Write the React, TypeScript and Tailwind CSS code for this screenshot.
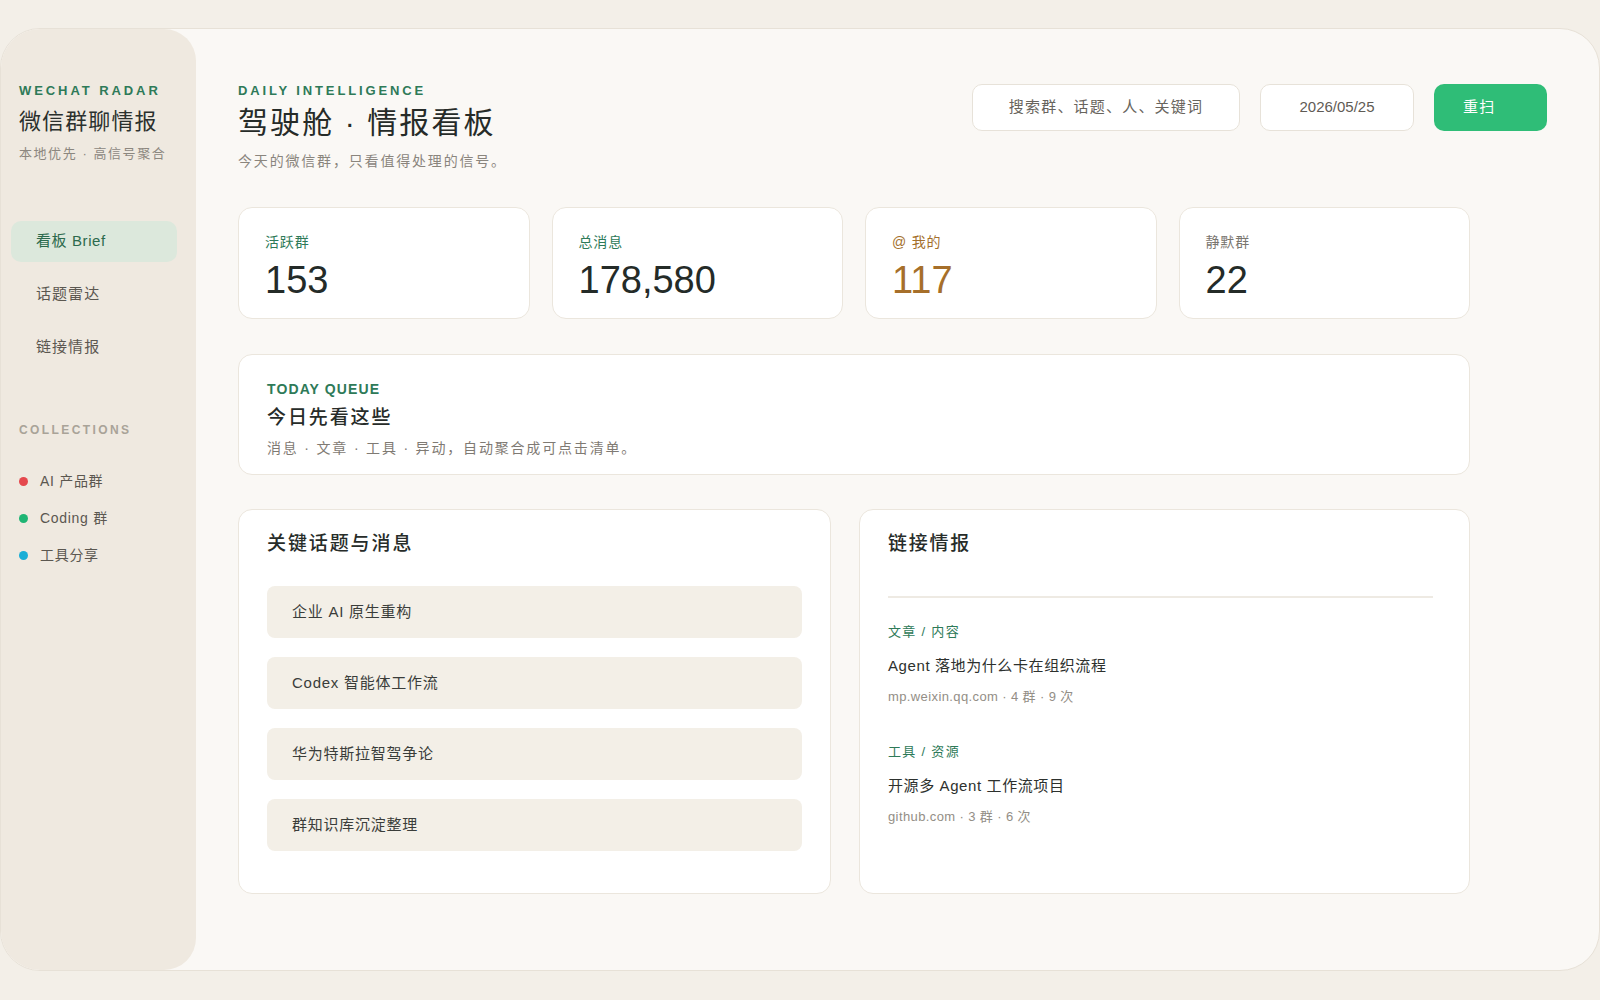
import React from "react";

const stats = [
  { label: "活跃群", value: "153", labelClass: "text-[#2e7a58]", valueClass: "text-[#242b28]" },
  { label: "总消息", value: "178,580", labelClass: "text-[#2e7a58]", valueClass: "text-[#242b28]" },
  { label: "@ 我的", value: "117", labelClass: "text-[#a4702c]", valueClass: "text-[#a66f2a]" },
  { label: "静默群", value: "22", labelClass: "text-[#7a766f]", valueClass: "text-[#242b28]" },
];

const topics = ["企业 AI 原生重构", "Codex 智能体工作流", "华为特斯拉智驾争论", "群知识库沉淀整理"];

const links = [
  { kind: "文章 / 内容", title: "Agent 落地为什么卡在组织流程", meta: "mp.weixin.qq.com · 4 群 · 9 次" },
  { kind: "工具 / 资源", title: "开源多 Agent 工作流项目", meta: "github.com · 3 群 · 6 次" },
];

const collections = [
  { name: "AI 产品群", dot: "bg-[#e5484d]" },
  { name: "Coding 群", dot: "bg-[#1fb574]" },
  { name: "工具分享", dot: "bg-[#1aaed6]" },
];

export default function App() {
  return (
    <div
      className="min-h-screen bg-[#f3efe8] pt-[28px] text-[#272d2a]"
      style={{ fontFamily: '"Liberation Sans", "Noto Sans CJK SC", sans-serif' }}
    >
      <div className="flex h-[943px] w-full overflow-hidden rounded-[40px] border border-[#e7e1d7] bg-[#faf8f5]">
        {/* sidebar */}
        <aside className="flex w-[195px] shrink-0 flex-col rounded-r-[32px] bg-[#efe9e0]">
          <div className="pl-[18px] pt-[54px]">
            <div className="text-[13px] font-bold leading-[16px] tracking-[0.225em] text-[#2e7a58]">WECHAT RADAR</div>
            <div className="mt-[8px] text-[22px] leading-[30px] tracking-[0.05em] text-[#2b302d]">微信群聊情报</div>
            <div className="mt-[8px] text-[13px] leading-[18px] tracking-[0.12em] text-[#8c877f]">本地优先 · 高信号聚合</div>
          </div>

          <nav className="ml-[10px] mr-[19px] mt-[58px] flex flex-col gap-[12px]">
            <div className="flex h-[41px] items-center rounded-[10px] bg-[#dce8dc] pl-[25px] text-[15px] tracking-[0.04em] text-[#2c6a4d]">
              看板 Brief
            </div>
            <div className="flex h-[41px] items-center pl-[25px] text-[15px] tracking-[0.07em] text-[#5b5750]">话题雷达</div>
            <div className="flex h-[41px] items-center pl-[25px] text-[15px] tracking-[0.07em] text-[#5b5750]">链接情报</div>
          </nav>

          <div className="mt-[54px] pl-[18px] text-[12px] font-bold leading-[16px] tracking-[0.2em] text-[#a9a398]">
            COLLECTIONS
          </div>
          <div className="mt-[33px] flex flex-col gap-[17px] pl-[18px]">
            {collections.map((c) => (
              <div key={c.name} className="flex h-[20px] items-center text-[14px] tracking-[0.05em] text-[#5b5750]">
                <span className={`h-[9px] w-[9px] rounded-full ${c.dot}`} />
                <span className="ml-[12px]">{c.name}</span>
              </div>
            ))}
          </div>
        </aside>

        {/* main */}
        <main className="flex-1 pl-[42px] pr-[52px] pt-[54px]">
          <header className="flex items-start justify-between">
            <div>
              <div className="text-[13px] font-bold leading-[16px] tracking-[0.22em] text-[#2e7a58]">DAILY INTELLIGENCE</div>
              <h1 className="mt-[6px] text-[30px] leading-[36px] tracking-[0.07em] text-[#262b28]">
                驾驶舱 · 情报看板
              </h1>
              <p className="mt-[10px] text-[14px] leading-[20px] tracking-[0.13em] text-[#8a857d]">今天的微信群，只看值得处理的信号。</p>
            </div>
            <div className="mt-[1px] flex items-center gap-[20px]">
              <div className="flex h-[47px] w-[268px] items-center justify-center rounded-[10px] border border-[#e7e2d9] bg-white text-[15px] tracking-[0.08em] text-[#68645d]">
                搜索群、话题、人、关键词
              </div>
              <div className="flex h-[47px] w-[154px] items-center justify-center rounded-[10px] border border-[#e7e2d9] bg-white text-[15px] text-[#5f5b55]">
                2026/05/25
              </div>
              <button className="h-[47px] w-[113px] rounded-[10px] bg-[#2fbd77] pl-[29px] text-left text-[15px] tracking-[0.08em] text-white">
                重扫
              </button>
            </div>
          </header>

          <div className="w-[1232px]">
            <section className="mt-[36px] grid grid-cols-4 gap-[22px]">
              {stats.map((s) => (
                <div key={s.label} className="h-[112px] rounded-[14px] border border-[#ebe6dd] bg-white pl-[26px] pt-[25px]">
                  <div className={`text-[14px] leading-[18px] tracking-[0.06em] ${s.labelClass}`}>{s.label}</div>
                  <div className={`mt-[7px] text-[38px] leading-[44px] ${s.valueClass}`}>{s.value}</div>
                </div>
              ))}
            </section>

            <section className="mt-[35px] h-[121px] rounded-[14px] border border-[#ebe6dd] bg-white pl-[28px] pt-[26px]">
              <div className="text-[14px] font-bold leading-[16px] tracking-[0.08em] text-[#2e7a58]">TODAY QUEUE</div>
              <div className="mt-[8px] text-[19px] font-medium leading-[26px] tracking-[0.1em] text-[#272c29]">今日先看这些</div>
              <div className="mt-[7px] text-[14px] leading-[20px] tracking-[0.13em] text-[#7f7a73]">消息 · 文章 · 工具 · 异动，自动聚合成可点击清单。</div>
            </section>

            <section className="mt-[34px] grid grid-cols-[593px_1fr] gap-[28px]">
              <div className="h-[385px] rounded-[14px] border border-[#ebe6dd] bg-white px-[28px] pt-[21px]">
                <h2 className="text-[19px] font-medium leading-[26px] tracking-[0.1em] text-[#272c29]">关键话题与消息</h2>
                <div className="mt-[29px] flex flex-col gap-[19px]">
                  {topics.map((t) => (
                    <div key={t} className="flex h-[52px] items-center rounded-[8px] bg-[#f3efe7] pl-[25px] text-[15px] tracking-[0.05em] text-[#3a3d3a]">
                      {t}
                    </div>
                  ))}
                </div>
              </div>

              <div className="h-[385px] rounded-[14px] border border-[#ebe6dd] bg-white pl-[28px] pr-[36px] pt-[21px]">
                <h2 className="text-[19px] font-medium leading-[26px] tracking-[0.09em] text-[#272c29]">链接情报</h2>
                <div className="mt-[39px] h-[2px] bg-[#eeeae3]" />
                <div className="mt-[25px]">
                  {links.map((l, i) => (
                    <div key={l.title} className={i > 0 ? "mt-[37px]" : ""}>
                      <div className="text-[13px] leading-[18px] tracking-[0.1em] text-[#2e7a58]">{l.kind}</div>
                      <div className="mt-[14px] text-[15px] leading-[22px] tracking-[0.04em] text-[#2d312e]">{l.title}</div>
                      <div className="mt-[11px] text-[13px] leading-[18px] tracking-[0.03em] text-[#938e86]">{l.meta}</div>
                    </div>
                  ))}
                </div>
              </div>
            </section>
          </div>
        </main>
      </div>
    </div>
  );
}
